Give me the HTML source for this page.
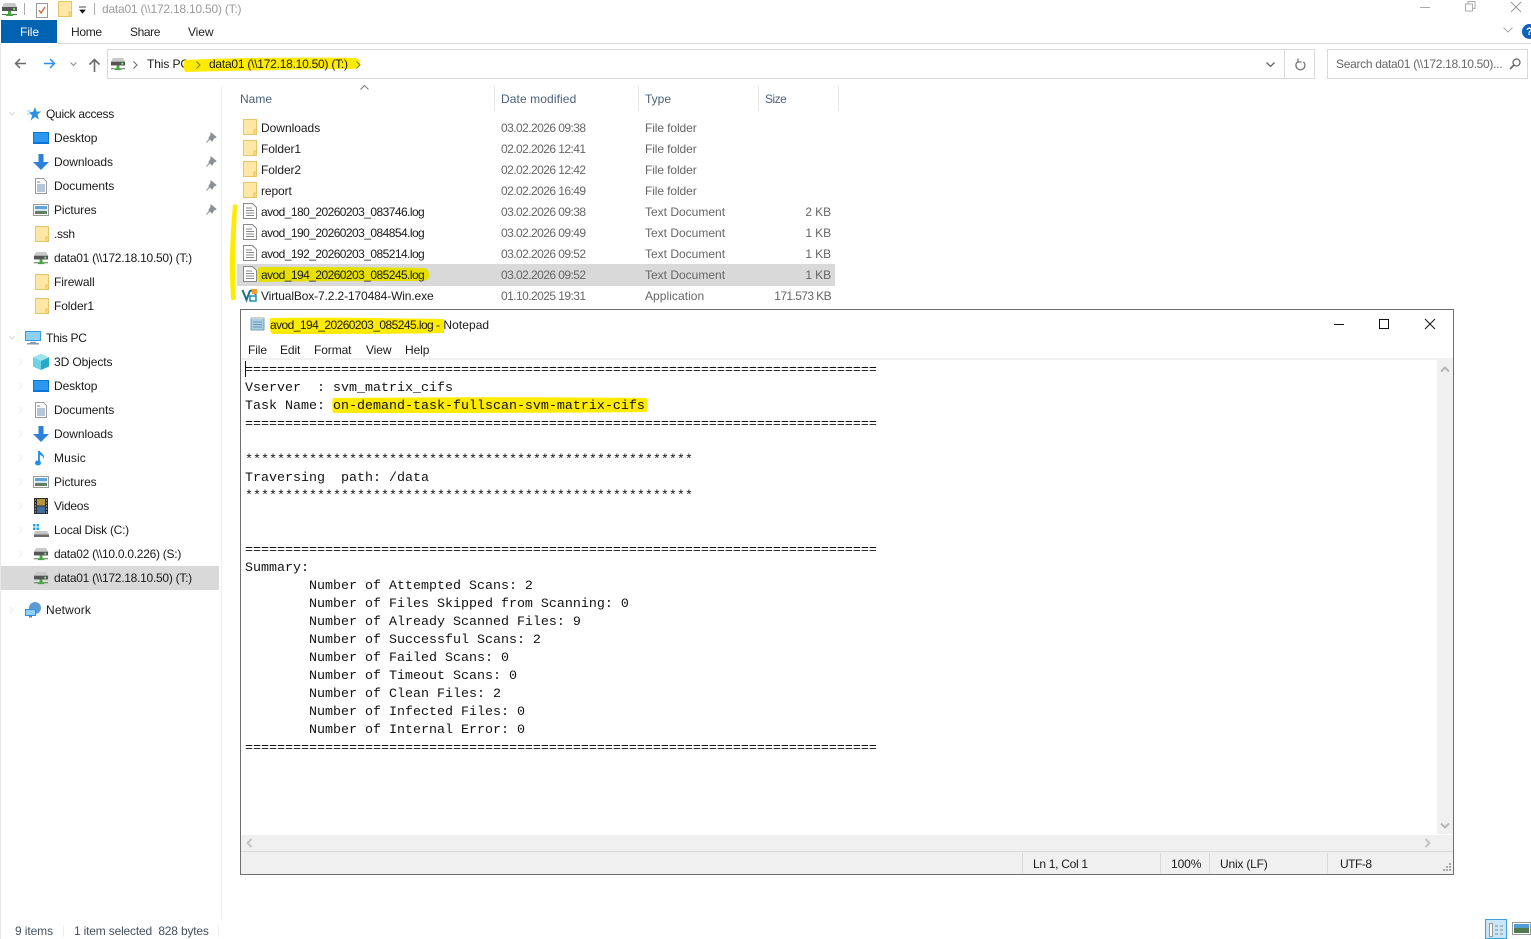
<!DOCTYPE html>
<html><head><meta charset="utf-8"><style>
html,body{margin:0;padding:0;background:#fff;width:1531px;height:939px;overflow:hidden}
body{position:relative;font:12px/16px "Liberation Sans",sans-serif;color:#1a1a1a}
.t{position:absolute;white-space:nowrap;letter-spacing:-.1px}
.g{color:#666}
.h{color:#4c607a;letter-spacing:0}
.d{letter-spacing:-.56px}
.u{letter-spacing:-.27px}
.b{position:absolute}
svg.i{position:absolute;overflow:visible}
pre{position:absolute;margin:0;left:245px;top:362px;font:13.33px/18px "Liberation Mono",monospace;color:#111}
</style></head><body>
<svg width="0" height="0" style="position:absolute">
<defs>
<symbol id="folder" viewBox="0 0 14 16" overflow="visible"><path d="M.5.5H13.5V15.5H.5Z" fill="#ffe8a6" stroke="#e8c468"/><path d="M11 11h2.500v4.500H11z" fill="#ffd970" stroke="#e8c468"/></symbol>
<symbol id="drive" viewBox="0 0 16 16" overflow="visible"><path d="M2 1h11l2 4H0z" fill="#c9c9c9"/><path d="M0 5h15v4H0z" fill="#555"/><circle cx="12" cy="7" r="1" fill="#7dff7d"/><path d="M6 9h3v3h2v2H4v-2h2z" fill="#3fa63f"/><path d="M0 12.500h4M11 12.500h4" stroke="#666"/></symbol>
<symbol id="doc" viewBox="0 0 14 16" overflow="visible"><path d="M.5.5h9l4 4v11H.5z" fill="#fff" stroke="#888"/><path d="M3 5h6M3 7.500h8M3 10h8M3 12.500h8" stroke="#888"/></symbol>
<symbol id="pin" viewBox="0 0 10 10" overflow="visible"><path d="M5 0l5 4-2 1-2 3-3-3 2-3zM3.500 6L.5 9.500" fill="#8b9096" stroke="#8b9096"/></symbol>
<symbol id="desk" viewBox="0 0 16 12" overflow="visible"><path d="M0 0h16v12H0z" fill="#0b74d6"/><path d="M1 1h14v9H1z" fill="#2c98ee"/></symbol>
<symbol id="down" viewBox="0 0 16 16" overflow="visible"><path d="M5.500 0h5v8H16l-8 8-8-8h5.500z" fill="#2e7fd6"/></symbol>
<symbol id="docs" viewBox="0 0 12 16" overflow="visible"><path d="M.5.5h8l3 3v12H.5z" fill="#fff" stroke="#999"/><path d="M2 4h3M2 7h8M2 9h8M2 11h8M2 13h8" stroke="#6a8fb5"/></symbol>
<symbol id="pic" viewBox="0 0 16 12" overflow="visible"><path d="M.5.5h15v11H.5z" fill="#fff" stroke="#999"/><path d="M2 2h12v3H2z" fill="#5aa5dc"/><path d="M2 5h12v2H2z" fill="#d5e3e8"/><path d="M2 7h12v3H2z" fill="#5f7f66"/></symbol>
<symbol id="arrow" viewBox="0 0 8 8" overflow="visible"><path d="M1 2l3 3 3-3" fill="none" stroke="#d8d8d8" stroke-width="1"/></symbol>
<symbol id="arrowr" viewBox="0 0 8 8" overflow="visible"><path d="M2 1l3 3-3 3" fill="none" stroke="#ececec" stroke-width="1"/></symbol>
</defs></svg>

<!-- title bar -->
<svg class="i" style="left:2px;top:2px" width="16" height="16"><use href="#drive"/></svg>
<div class="b" style="left:24px;top:3px;width:1px;height:12px;background:#aaa"></div>
<svg class="i" style="left:36px;top:1px" width="13" height="17"><path d="M.5 2.500h11v14H.5z" fill="#fff" stroke="#999"/><path d="M3 9l2 3 4-6" fill="none" stroke="#e05a2b" stroke-width="1.300"/></svg>
<svg class="i" style="left:58px;top:1px" width="14" height="16"><use href="#folder"/></svg>
<svg class="i" style="left:79px;top:6px" width="8" height="8"><path d="M0 1h7M1 4h5L3.500 7z" fill="#111" stroke="#111" stroke-width=".8"/></svg>
<div class="b" style="left:94px;top:3px;width:1px;height:12px;background:#aaa"></div>
<div class="t" style="left:102px;top:1px;color:#9a9a9a;letter-spacing:-.22px">data01 (\\172.18.10.50) (T:)</div>
<div class="b" style="left:1420px;top:7px;width:10px;height:1px;background:#aaa"></div>
<svg class="i" style="left:1465px;top:1px" width="11" height="11"><path d="M.5 3h7v7h-7zM3 3V.5h7v7H7.500" fill="none" stroke="#aaa"/></svg>
<svg class="i" style="left:1511px;top:2px" width="10" height="10"><path d="M0 0l10 10M10 0L0 10" stroke="#999"/></svg>

<!-- ribbon -->
<div class="b" style="left:1px;top:20px;width:56px;height:23px;background:#0063b1"></div>
<div class="t" style="left:20px;top:24px;color:#fff">File</div>
<div class="t" style="left:71px;top:24px;color:#222;letter-spacing:-.3px">Home</div>
<div class="t" style="left:130px;top:24px;color:#222;letter-spacing:-.4px">Share</div>
<div class="t" style="left:188px;top:24px;color:#222">View</div>
<div class="b" style="left:57px;top:43px;width:1474px;height:1px;background:#dadbdc"></div>
<svg class="i" style="left:1503px;top:27px" width="10" height="6"><path d="M.5.500l4.500 4.500 4.500-4.500" fill="none" stroke="#aaa"/></svg>
<div class="b" style="left:1522px;top:24px;width:15px;height:15px;border-radius:50%;background:#0a62c0"></div>
<div class="t" style="left:1526px;top:24px;color:#fff;font-weight:bold;font-size:11px">?</div>

<!-- nav bar -->
<svg class="i" style="left:14px;top:57px" width="13" height="13"><path d="M12 6.500H1.500M6 2L1.500 6.500 6 11" fill="none" stroke="#6a6a6a" stroke-width="1.500"/></svg>
<svg class="i" style="left:43px;top:57px" width="13" height="13"><path d="M1 6.500h10.500M7 2l4.500 4.500L7 11" fill="none" stroke="#2e8ff0" stroke-width="1.500"/></svg>
<svg class="i" style="left:70px;top:62px" width="7" height="4"><path d="M.5.500l3 3 3-3" fill="none" stroke="#8a8a8a"/></svg>
<svg class="i" style="left:88px;top:58px" width="13" height="14"><path d="M6.500 14V2M1.500 6.500l5-5 5 5" fill="none" stroke="#6a6a6a" stroke-width="1.600"/></svg>
<div class="b" style="left:107px;top:49px;width:1208px;height:30px;border:1px solid #d9d9d9;box-sizing:border-box"></div>
<div class="b" style="left:1284px;top:50px;width:1px;height:28px;background:#d9d9d9"></div>
<svg class="i" style="left:111px;top:57px" width="15" height="15"><use href="#drive"/></svg>
<svg class="i" style="left:133px;top:61px" width="5" height="8"><path d="M.5.500l3.500 3.500-3.500 3.500" fill="none" stroke="#666"/></svg>
<div class="t" style="left:147px;top:56px">This PC</div>
<svg class="i" style="left:182px;top:54px" width="182" height="22"><path d="M3 6C40 4 130 3 172 4c4 0 7 3 6 7-1 3-4 4-10 4-40 0-120 2-165 3-2-4-2-9 0-12z" fill="#ffeb00"/></svg>
<svg class="i" style="left:196px;top:61px" width="5" height="8"><path d="M.5.500l3.500 3.500-3.500 3.500" fill="none" stroke="#7a7a30"/></svg>
<div class="t" style="left:209px;top:56px;letter-spacing:-.24px">data01 (\\172.18.10.50) (T:)</div>
<svg class="i" style="left:356px;top:61px" width="5" height="8"><path d="M.5.500l3.500 3.500-3.500 3.500" fill="none" stroke="#7a7a30"/></svg>
<svg class="i" style="left:1266px;top:62px" width="9" height="6"><path d="M.5.500l4 4 4-4" fill="none" stroke="#666" stroke-width="1.300"/></svg>
<svg class="i" style="left:1294px;top:58px" width="12" height="13"><path d="M9.500 4A4.500 4.500 0 1 1 4 3.500M4 .5V4h3.500" fill="none" stroke="#777" stroke-width="1.300"/></svg>
<div class="b" style="left:1327px;top:49px;width:201px;height:30px;border:1px solid #d9d9d9;box-sizing:border-box"></div>
<div class="t g" style="left:1336px;top:56px;letter-spacing:-.3px">Search data01 (\\172.18.10.50)...</div>
<svg class="i" style="left:1509px;top:58px" width="12" height="12"><circle cx="7.500" cy="4.500" r="3.500" fill="none" stroke="#666" stroke-width="1.300"/><path d="M5 7L1 11" stroke="#666" stroke-width="1.600"/></svg>

<!-- nav pane -->
<div class="b" style="left:0;top:44px;width:1px;height:895px;background:#e8e8e8"></div>
<div class="b" style="left:221px;top:86px;width:1px;height:832px;background:#f0f0f0"></div>
<svg class="i" style="left:8px;top:110px" width="8" height="8"><use href="#arrow"/></svg>
<svg class="i" style="left:27px;top:107px" width="14" height="14"><path d="M8 0l1.500 4.500H14l-3.500 3 1.300 5L8 10l-4.500 3.500 1.700-5L2 5.500 6 4.800z" fill="#2f8fe6"/><path d="M0 4h4M0 7h3" stroke="#9cc9ef"/></svg>
<div class="t" style="left:46px;top:106px;letter-spacing:-.28px">Quick access</div>

<svg class="i" style="left:33px;top:132px" width="16" height="12"><use href="#desk"/></svg><div class="t" style="left:54px;top:130px">Desktop</div>
<svg class="i" style="left:206px;top:133px" width="10" height="10"><use href="#pin"/></svg>
<svg class="i" style="left:33px;top:154px" width="16" height="16"><use href="#down"/></svg><div class="t" style="left:54px;top:154px;letter-spacing:-.05px">Downloads</div>
<svg class="i" style="left:206px;top:157px" width="10" height="10"><use href="#pin"/></svg>
<svg class="i" style="left:35px;top:178px" width="12" height="16"><use href="#docs"/></svg><div class="t" style="left:54px;top:178px;letter-spacing:-.05px">Documents</div>
<svg class="i" style="left:206px;top:181px" width="10" height="10"><use href="#pin"/></svg>
<svg class="i" style="left:33px;top:204px" width="16" height="12"><use href="#pic"/></svg><div class="t" style="left:54px;top:202px">Pictures</div>
<svg class="i" style="left:206px;top:205px" width="10" height="10"><use href="#pin"/></svg>
<svg class="i" style="left:35px;top:226px" width="14" height="16"><use href="#folder"/></svg><div class="t" style="left:54px;top:226px;letter-spacing:-.3px">.ssh</div>
<svg class="i" style="left:34px;top:251px" width="15" height="15"><use href="#drive"/></svg><div class="t u" style="left:54px;top:250px">data01 (\\172.18.10.50) (T:)</div>
<svg class="i" style="left:35px;top:274px" width="14" height="16"><use href="#folder"/></svg><div class="t" style="left:54px;top:274px">Firewall</div>
<svg class="i" style="left:35px;top:298px" width="14" height="16"><use href="#folder"/></svg><div class="t" style="left:54px;top:298px">Folder1</div>

<svg class="i" style="left:8px;top:334px" width="8" height="8"><use href="#arrow"/></svg>
<svg class="i" style="left:25px;top:331px" width="16" height="14"><path d="M0 0h16v10H0z" fill="#3a99e0"/><path d="M1 1h14v8H1z" fill="#8fd0f7"/><path d="M5 11h6v1h3v1.500H2V12h3z" fill="#8a9aa8"/></svg>
<div class="t" style="left:46px;top:330px;letter-spacing:-.3px">This PC</div>

<svg class="i" style="left:17px;top:358px" width="8" height="8"><use href="#arrowr"/></svg>
<svg class="i" style="left:33px;top:354px" width="16" height="16"><path d="M8 0l8 3.500v9L8 16 0 12.500v-9z" fill="#27a9c9"/><path d="M0 3.500L8 7l8-3.500L8 0z" fill="#9ce3ee"/><path d="M8 7v9L0 12.500v-9z" fill="#6fd2e2"/></svg>
<div class="t" style="left:54px;top:354px">3D Objects</div>
<svg class="i" style="left:17px;top:382px" width="8" height="8"><use href="#arrowr"/></svg>
<svg class="i" style="left:33px;top:380px" width="16" height="12"><use href="#desk"/></svg><div class="t" style="left:54px;top:378px">Desktop</div>
<svg class="i" style="left:17px;top:406px" width="8" height="8"><use href="#arrowr"/></svg>
<svg class="i" style="left:35px;top:402px" width="12" height="16"><use href="#docs"/></svg><div class="t" style="left:54px;top:402px;letter-spacing:-.05px">Documents</div>
<svg class="i" style="left:17px;top:430px" width="8" height="8"><use href="#arrowr"/></svg>
<svg class="i" style="left:33px;top:426px" width="16" height="16"><use href="#down"/></svg><div class="t" style="left:54px;top:426px;letter-spacing:-.05px">Downloads</div>
<svg class="i" style="left:17px;top:454px" width="8" height="8"><use href="#arrowr"/></svg>
<svg class="i" style="left:35px;top:450px" width="12" height="16"><path d="M4 1v11.500" stroke="#1f8fe8" stroke-width="1.800"/><ellipse cx="3" cy="13" rx="3" ry="2.500" fill="#1f8fe8"/><path d="M4 0c1 3 6 4 5 9-1-3-3-4-5-4z" fill="#1f8fe8"/></svg>
<div class="t" style="left:54px;top:450px;letter-spacing:.1px">Music</div>
<svg class="i" style="left:17px;top:478px" width="8" height="8"><use href="#arrowr"/></svg>
<svg class="i" style="left:33px;top:476px" width="16" height="12"><use href="#pic"/></svg><div class="t" style="left:54px;top:474px">Pictures</div>
<svg class="i" style="left:17px;top:502px" width="8" height="8"><use href="#arrowr"/></svg>
<svg class="i" style="left:34px;top:498px" width="14" height="16"><path d="M0 0h14v16H0z" fill="#2d2d2d"/><path d="M3 1h8v6.500H3z" fill="#b8963f"/><path d="M3 8.500h8V15H3z" fill="#3b6fa4"/><path d="M1 2h1M1 5h1M1 8h1M1 11h1M1 14h1M12 2h1M12 5h1M12 8h1M12 11h1M12 14h1" stroke="#ddd"/></svg>
<div class="t" style="left:54px;top:498px;letter-spacing:-.25px">Videos</div>
<svg class="i" style="left:17px;top:526px" width="8" height="8"><use href="#arrowr"/></svg>
<svg class="i" style="left:33px;top:524px" width="16" height="14"><path d="M0 0h2.500v2.500H0zM3.500 0H6v2.500H3.500zM0 3.500h2.500V6H0zM3.500 3.500H6V6H3.500z" fill="#1fa3ef"/><path d="M2 7h12l2 3v2.500H1V10z" fill="#c4c4c4"/><path d="M1 10.500h15v2.500H1z" fill="#6a6a6a"/></svg>
<div class="t" style="left:54px;top:522px;letter-spacing:-.25px">Local Disk (C:)</div>
<svg class="i" style="left:17px;top:550px" width="8" height="8"><use href="#arrowr"/></svg>
<svg class="i" style="left:34px;top:547px" width="15" height="15"><use href="#drive"/></svg><div class="t u" style="left:54px;top:546px">data02 (\\10.0.0.226) (S:)</div>
<div class="b" style="left:1px;top:566px;width:218px;height:24px;background:#d9d9d9"></div>
<svg class="i" style="left:34px;top:571px" width="15" height="15"><use href="#drive"/></svg><div class="t u" style="left:54px;top:570px">data01 (\\172.18.10.50) (T:)</div>
<svg class="i" style="left:8px;top:606px" width="8" height="8"><use href="#arrowr"/></svg>
<svg class="i" style="left:25px;top:602px" width="16" height="16"><circle cx="10" cy="6" r="6" fill="#5b9bd5"/><path d="M0 7h11v7H0z" fill="#2f8fe0"/><path d="M1 8h9v5H1z" fill="#8fd0f7"/><path d="M4 14h3v1.500H4z" fill="#778"/></svg>
<div class="t" style="left:46px;top:602px;letter-spacing:.15px">Network</div>

<!-- file list header -->
<svg class="i" style="left:360px;top:85px" width="9" height="5"><path d="M.5 4.500l4-4 4 4" fill="none" stroke="#777"/></svg>
<div class="t h" style="left:240px;top:91px">Name</div>
<div class="t h" style="left:501px;top:91px;letter-spacing:.1px">Date modified</div>
<div class="t h" style="left:645px;top:91px">Type</div>
<div class="t h" style="left:765px;top:91px;letter-spacing:-.5px">Size</div>
<div class="b" style="left:494px;top:86px;width:1px;height:25px;background:#e5e5e5"></div>
<div class="b" style="left:638px;top:86px;width:1px;height:25px;background:#e5e5e5"></div>
<div class="b" style="left:758px;top:86px;width:1px;height:25px;background:#e5e5e5"></div>
<div class="b" style="left:838px;top:86px;width:1px;height:25px;background:#e5e5e5"></div>

<!-- selected row and marker -->
<div class="b" style="left:237px;top:264px;width:598px;height:22px;background:#d9d9d9"></div>
<svg class="i" style="left:228px;top:200px" width="14" height="106"><path d="M5 5c2-1 4-1 4 1-1 30-3 60-1 92 0 2-4 3-5 1-2-32-1-62 2-94z" fill="#ffeb00"/></svg>
<svg class="i" style="left:256px;top:266px" width="176" height="18"><path d="M3 1c50 0 120 0 164 1 5 0 7 4 6 9-1 3-3 4-8 4-50 0-110 0-162 1-2-4-2-11 0-15z" fill="#e6e000"/></svg>

<!-- rows -->
<svg class="i" style="left:243px;top:119px" width="14" height="16"><use href="#folder"/></svg><div class="t" style="left:261px;top:120px;letter-spacing:-.02px">Downloads</div><div class="t g d" style="left:501px;top:120px">03.02.2026 09:38</div><div class="t g" style="left:645px;top:120px">File folder</div>
<svg class="i" style="left:243px;top:140px" width="14" height="16"><use href="#folder"/></svg><div class="t" style="left:261px;top:141px">Folder1</div><div class="t g d" style="left:501px;top:141px">02.02.2026 12:41</div><div class="t g" style="left:645px;top:141px">File folder</div>
<svg class="i" style="left:243px;top:161px" width="14" height="16"><use href="#folder"/></svg><div class="t" style="left:261px;top:162px">Folder2</div><div class="t g d" style="left:501px;top:162px">02.02.2026 12:42</div><div class="t g" style="left:645px;top:162px">File folder</div>
<svg class="i" style="left:243px;top:182px" width="14" height="16"><use href="#folder"/></svg><div class="t" style="left:261px;top:183px">report</div><div class="t g d" style="left:501px;top:183px">02.02.2026 16:49</div><div class="t g" style="left:645px;top:183px">File folder</div>
<svg class="i" style="left:243px;top:203px" width="14" height="16"><use href="#doc"/></svg><div class="t d" style="left:261px;top:204px">avod_180_20260203_083746.log</div><div class="t g d" style="left:501px;top:204px">03.02.2026 09:38</div><div class="t g" style="left:645px;top:204px;letter-spacing:0">Text Document</div><div class="t g" style="right:700px;top:204px">2 KB</div>
<svg class="i" style="left:243px;top:224px" width="14" height="16"><use href="#doc"/></svg><div class="t d" style="left:261px;top:225px">avod_190_20260203_084854.log</div><div class="t g d" style="left:501px;top:225px">03.02.2026 09:49</div><div class="t g" style="left:645px;top:225px;letter-spacing:0">Text Document</div><div class="t g" style="right:700px;top:225px">1 KB</div>
<svg class="i" style="left:243px;top:245px" width="14" height="16"><use href="#doc"/></svg><div class="t d" style="left:261px;top:246px">avod_192_20260203_085214.log</div><div class="t g d" style="left:501px;top:246px">03.02.2026 09:52</div><div class="t g" style="left:645px;top:246px;letter-spacing:0">Text Document</div><div class="t g" style="right:700px;top:246px">1 KB</div>
<svg class="i" style="left:243px;top:266px" width="14" height="16"><use href="#doc"/></svg><div class="t d" style="left:261px;top:267px">avod_194_20260203_085245.log</div><div class="t g d" style="left:501px;top:267px">03.02.2026 09:52</div><div class="t g" style="left:645px;top:267px;letter-spacing:0">Text Document</div><div class="t g" style="right:700px;top:267px">1 KB</div>
<svg class="i" style="left:241px;top:288px" width="17" height="15"><path d="M1.500 2l4 10 3-8c0-2 6-2 6 0v3" fill="none" stroke="#1f6f8f" stroke-width="2"/><path d="M9 8h6v5H9z" fill="none" stroke="#1f8fb0" stroke-width="1.500"/><path d="M11 1h5v5h-5z" fill="#f0a030"/></svg>
<div class="t" style="left:261px;top:288px;letter-spacing:-.13px">VirtualBox-7.2.2-170484-Win.exe</div><div class="t g d" style="left:501px;top:288px">01.10.2025 19:31</div><div class="t g" style="left:645px;top:288px;letter-spacing:.05px">Application</div><div class="t g" style="right:700px;top:288px;letter-spacing:-.6px">171.573 KB</div>

<!-- notepad -->
<div class="b" style="left:240px;top:309px;width:1214px;height:566px;background:#fff;border:1px solid #6e6e6e;box-sizing:border-box"></div>
<svg class="i" style="left:250px;top:316px" width="15" height="15"><path d="M1 2h13v12H1z" fill="#a8cfe6" stroke="#7d9cb0"/><path d="M1 1h13v2H1z" fill="#d0d0d0"/><path d="M3 6h9M3 8.500h9M3 11h9" stroke="#6f97b0"/></svg>
<svg class="i" style="left:268px;top:316px" width="178" height="20"><path d="M2 2c50-1 110 0 174 1v14c-50 1-120 1-172 1-2-1-3-12-2-16z" fill="#ffeb00"/></svg>
<div class="t d" style="left:270px;top:317px">avod_194_20260203_085245.log</div>
<div class="t" style="left:436px;top:317px;letter-spacing:.05px">- Notepad</div>
<div class="b" style="left:1334px;top:324px;width:10px;height:1px;background:#111"></div>
<div class="b" style="left:1379px;top:319px;width:10px;height:10px;border:1px solid #111;box-sizing:border-box"></div>
<svg class="i" style="left:1425px;top:319px" width="10" height="10"><path d="M0 0l10 10M10 0L0 10" stroke="#111"/></svg>
<div class="t" style="left:248px;top:342px">File</div>
<div class="t" style="left:280px;top:342px">Edit</div>
<div class="t" style="left:314px;top:342px">Format</div>
<div class="t" style="left:366px;top:342px">View</div>
<div class="t" style="left:405px;top:342px">Help</div>
<div class="b" style="left:241px;top:358px;width:1212px;height:2px;background:#f0f0f0"></div>
<div class="b" style="left:1437px;top:360px;width:16px;height:474px;background:#f0f0f0"></div>
<svg class="i" style="left:1440px;top:366px" width="10" height="7"><path d="M1 5.500l4-4 4 4" fill="none" stroke="#b5b5b5" stroke-width="2"/></svg>
<svg class="i" style="left:1440px;top:822px" width="10" height="7"><path d="M1 1.500l4 4 4-4" fill="none" stroke="#b5b5b5" stroke-width="2"/></svg>
<div class="b" style="left:241px;top:835px;width:1212px;height:16px;background:#f0f0f0"></div>
<svg class="i" style="left:246px;top:838px" width="7" height="10"><path d="M5.500 1l-4 4 4 4" fill="none" stroke="#c4c4c4" stroke-width="2"/></svg>
<svg class="i" style="left:1424px;top:838px" width="7" height="10"><path d="M1.500 1l4 4-4 4" fill="none" stroke="#c4c4c4" stroke-width="2"/></svg>
<div class="b" style="left:241px;top:851px;width:1212px;height:1px;background:#d9d9d9"></div>
<div class="b" style="left:241px;top:852px;width:1212px;height:22px;background:#f0f0f0"></div>
<div class="b" style="left:1022px;top:853px;width:1px;height:20px;background:#d9d9d9"></div>
<div class="b" style="left:1160px;top:853px;width:1px;height:20px;background:#d9d9d9"></div>
<div class="b" style="left:1209px;top:853px;width:1px;height:20px;background:#d9d9d9"></div>
<div class="b" style="left:1327px;top:853px;width:1px;height:20px;background:#d9d9d9"></div>
<div class="t" style="left:1033px;top:856px;letter-spacing:-.3px">Ln 1, Col 1</div>
<div class="t" style="left:1171px;top:856px">100%</div>
<div class="t" style="left:1220px;top:856px;letter-spacing:-.2px">Unix (LF)</div>
<div class="t" style="left:1340px;top:856px;letter-spacing:-.5px">UTF-8</div>
<svg class="i" style="left:1443px;top:863px" width="9" height="9"><path d="M6 0h2v2H6zM3 3h2v2H3zM6 3h2v2H6zM0 6h2v2H0zM3 6h2v2H3zM6 6h2v2H6z" fill="#aaa"/></svg>
<svg class="i" style="left:330px;top:396px" width="320" height="19"><path d="M3 2c100-1 220-1 314 0 1 4 1 10 0 14-100 1-220 1-314 1-1-4-1-11 0-15z" fill="#ffeb00"/></svg>
<div class="b" style="left:245px;top:361px;width:1px;height:16px;background:#111"></div>
<pre>===============================================================================
Vserver  : svm_matrix_cifs
Task Name: on-demand-task-fullscan-svm-matrix-cifs
===============================================================================

********************************************************
Traversing  path: /data
********************************************************


===============================================================================
Summary:
        Number of Attempted Scans: 2
        Number of Files Skipped from Scanning: 0
        Number of Already Scanned Files: 9
        Number of Successful Scans: 2
        Number of Failed Scans: 0
        Number of Timeout Scans: 0
        Number of Clean Files: 2
        Number of Infected Files: 0
        Number of Internal Error: 0
===============================================================================</pre>

<!-- status bar -->
<div class="t" style="left:15px;top:923px;color:#444f60">9 items</div>
<div class="b" style="left:63px;top:925px;width:1px;height:12px;background:#eee"></div>
<div class="t" style="left:74px;top:923px;color:#444f60;letter-spacing:-.18px">1 item selected&nbsp; 828 bytes</div>
<div class="b" style="left:218px;top:925px;width:1px;height:12px;background:#eee"></div>
<div class="b" style="left:1485px;top:919px;width:22px;height:20px;background:#c9e6f7;border:1px solid #3aa0e0;box-sizing:border-box"></div>
<svg class="i" style="left:1489px;top:923px" width="16" height="14"><path d="M.5.5h3v13h-3z" fill="#fff" stroke="#999"/><path d="M6 3h3M11 3h3M6 7h3M11 7h3M6 11h3M11 11h3" stroke="#888"/></svg>
<svg class="i" style="left:1512px;top:922px" width="19" height="13"><path d="M.5.5h18v12H.5z" fill="#fff" stroke="#999"/><path d="M2 2h15v4H2z" fill="#4f9ed8"/><path d="M2 6h15v5H2z" fill="#4f7a4f"/></svg>
</body></html>
